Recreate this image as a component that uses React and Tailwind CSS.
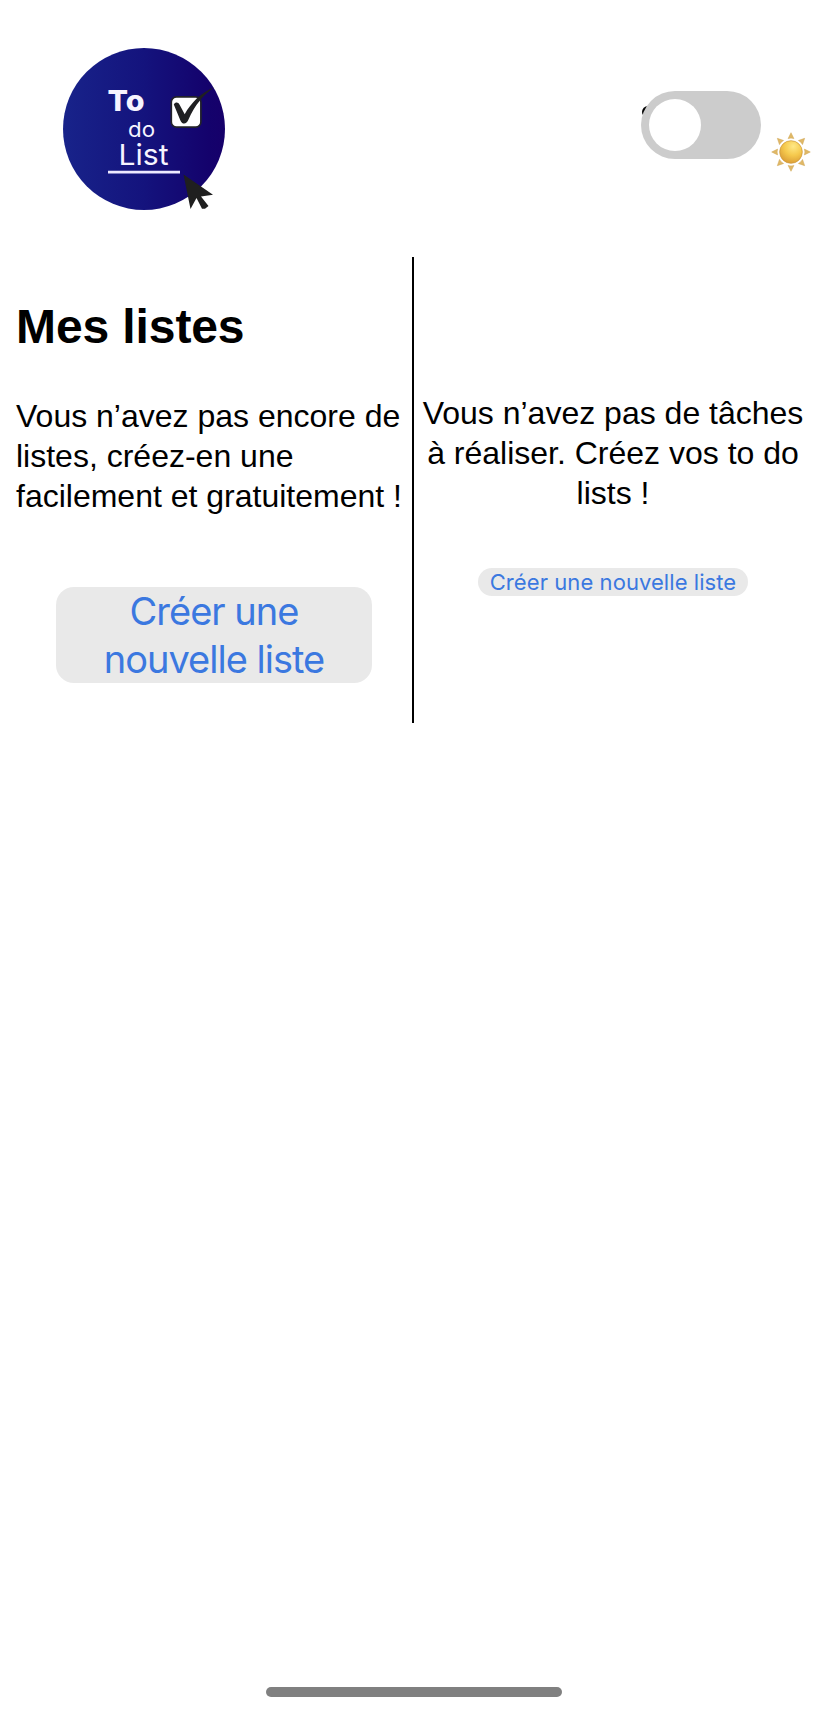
function Logo() {
  return (
    <svg className="h-[190px] w-[190px]" viewBox="0 0 190 190" role="img" aria-label="To do List">
      <defs>
        <linearGradient id="disc" x1="0" x2="1" y1="0" y2="0">
          <stop offset="0" stopColor="#18238a" />
          <stop offset="0.5" stopColor="#14137d" />
          <stop offset="0.9" stopColor="#14026c" />
          <stop offset="1" stopColor="#16006a" />
        </linearGradient>
      </defs>
      <circle cx="94" cy="94" r="81" fill="url(#disc)" />
      <g fill="#f6f4ff" fontFamily="Inter, sans-serif">
        <text x="57.5" y="76.3" fontSize="29" fontWeight="800" textLength="37" lengthAdjust="spacingAndGlyphs">To</text>
        <text x="78" y="102" fontSize="20.5" textLength="27" lengthAdjust="spacingAndGlyphs">do</text>
        <text x="68.500" y="129.5" fontSize="29" textLength="50" lengthAdjust="spacingAndGlyphs">List</text>
      </g>
      <path d="M58 137.2H130" stroke="#eeeaff" strokeWidth="2.8" />
      <rect x="121.3" y="61.9" width="29.6" height="30.3" rx="5.2" fill="#fff" stroke="#22222a" strokeWidth="1.7" />
      <path d="M123.800 69.400C125.500 66.800 128.300 67 129.600 69.800L134.700 79.300C141 68 150 58.500 164 52.300C153 60.500 144.500 70.500 138.500 84.500C136.500 89.500 132.300 90 130.300 85.200Z" fill="#202022" />
      <path d="M133.500 139.500L163 159.800L151 161.500L158.500 171L155 173.800L152 173.800L146.500 163L140.500 174Z" fill="#1f1f1f" />
    </svg>
  );
}

const RAYS = [0, 45, 90, 135, 180, 225, 270, 315];

function Sun() {
  return (
    <svg className="h-10 w-10" viewBox="-20 -20 40 40" aria-hidden="true">
      <defs>
        <radialGradient id="sun" cx="0.6" cy="0.25" r="0.8">
          <stop offset="0" stopColor="#ffe885" />
          <stop offset="0.5" stopColor="#f5c94d" />
          <stop offset="1" stopColor="#d99a35" />
        </radialGradient>
      </defs>
      {RAYS.map((angle) => (
        <path key={angle} d="M0 -19.300L2.900 -13.400Q0 -14.400 -2.900 -13.400Z" fill="#e0b866" stroke="#cfa655" strokeWidth="0.5" transform={`rotate(${angle})`} />
      ))}
      <circle r="11.300" fill="url(#sun)" stroke="#cc9638" strokeWidth="0.7" />
    </svg>
  );
}

function ThemeSwitch() {
  return (
    <div className="flex items-start">
      <button type="button" role="switch" aria-checked="false" aria-label="Mode sombre" className="relative mt-[91px] flex h-[68px] w-[120px] items-center px-2">
        <span className="absolute left-px top-[15px] h-3 w-3 rounded-full bg-black" />
        <span className="absolute inset-0 rounded-full bg-[#ccc]" />
        <span className="relative h-[52px] w-[52px] rounded-full bg-white" />
      </button>
      <div className="ml-2.5 mt-[132px]">
        <Sun />
      </div>
    </div>
  );
}

export default function App() {
  return (
    <div className="flex h-[1713px] w-[828px] flex-col bg-white font-['Liberation_Sans',Arial,sans-serif] text-black">
      <header className="flex h-[257px] items-start justify-between pl-[50px] pr-[17px]">
        <div className="pt-[35px]">
          <Logo />
        </div>
        <ThemeSwitch />
      </header>
      <main className="flex h-[466px]">
        <section className="w-[414px] border-r-2 border-black pl-4 pt-[42px]">
          <h1 className="text-[48px] font-bold leading-[56px] tracking-[-0.1px]">Mes listes</h1>
          <p className="mt-[41px] whitespace-nowrap text-[32px] leading-10">
            Vous n’avez pas encore de<br />listes, créez-en une<br />facilement et gratuitement !
          </p>
          <button type="button" className="ml-10 mt-[71px] block h-24 w-[316px] rounded-[18px] bg-[#e9e9e9] font-['Inter',sans-serif] text-[38px] leading-[48px] tracking-[-1px] text-[#3b78e0]">
            Créer une<br />nouvelle liste
          </button>
        </section>
        <section className="flex w-[398px] flex-col items-center pt-[136px]">
          <p className="whitespace-nowrap text-center text-[32px] leading-10">
            Vous n’avez pas de tâches<br />à réaliser. Créez vos to do<br />lists !
          </p>
          <button type="button" className="mt-[55px] h-7 w-[270px] whitespace-nowrap rounded-full bg-[#e9e9e9] font-['Inter',sans-serif] text-[22px] leading-7 tracking-[0.07px] text-[#3b78e0]">
            Créer une nouvelle liste
          </button>
        </section>
      </main>
      <footer className="mt-auto flex justify-center pb-4">
        <div className="h-2.5 w-[296px] rounded-full bg-[#808080]" />
      </footer>
    </div>
  );
}
